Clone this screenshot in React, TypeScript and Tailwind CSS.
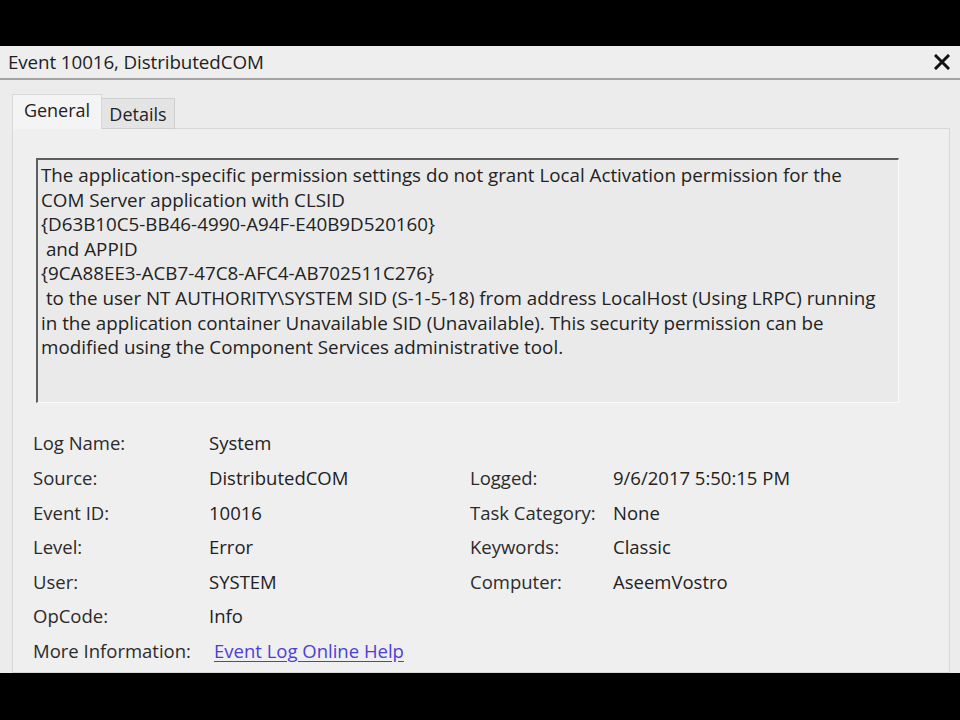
import React from 'react';

const rows: { label: string; value: string; label2?: string; value2?: string; link?: boolean }[] = [
    { label: 'Log Name:', value: 'System' },
    { label: 'Source:', value: 'DistributedCOM', label2: 'Logged:', value2: '9/6/2017 5:50:15 PM' },
    { label: 'Event ID:', value: '10016', label2: 'Task Category:', value2: 'None' },
    { label: 'Level:', value: 'Error', label2: 'Keywords:', value2: 'Classic' },
    { label: 'User:', value: 'SYSTEM', label2: 'Computer:', value2: 'AseemVostro' },
    { label: 'OpCode:', value: 'Info' },
    { label: 'More Information:', value: 'Event Log Online Help', link: true },
];

const message = [
    'The application-specific permission settings do not grant Local Activation permission for the',
    'COM Server application with CLSID',
    '{D63B10C5-BB46-4990-A94F-E40B9D520160}',
    '\u00a0and APPID',
    '{9CA88EE3-ACB7-47C8-AFC4-AB702511C276}',
    '\u00a0to the user NT AUTHORITY\\SYSTEM SID (S-1-5-18) from address LocalHost (Using LRPC) running',
    'in the application container Unavailable SID (Unavailable). This security permission can be',
    'modified using the Component Services administrative tool.',
];

const App = () => {
    return (
        <div className="w-[960px] h-[720px] bg-black flex flex-col overflow-hidden text-[#222] font-['Open_Sans',sans-serif]">
            <div className="h-[46px] shrink-0" />

            <div className="h-[627px] shrink-0 bg-[#ececec] flex flex-col overflow-hidden">
                {/* title bar */}
                <div className="h-[34px] shrink-0 flex items-center justify-between pl-[8px] pr-[10px] border-b-2 border-[#a4a4a4] bg-[#eeeeee]">
                    <span className="text-[18.8px] tracking-[-0.1px] text-[#1e1e1e]">Event 10016, DistributedCOM</span>
                    <svg width="16" height="16" viewBox="0 0 16 16">
                        <path d="M2 2 L14 14 M14 2 L2 14" stroke="#111" strokeWidth="3" strokeLinecap="square" />
                    </svg>
                </div>

                <div className="flex-1 flex flex-col pl-[12px] pr-[10px] pt-[14px]">
                    {/* tabs */}
                    <div className="flex items-end h-[35px] shrink-0 relative z-10">
                        <div className="w-[90px] h-[35px] bg-[#f4f4f4] border border-b-0 border-[#d8d8d8] flex items-center justify-center text-[18px] text-[#222] pb-[4px]">
                            General
                        </div>
                        <div className="w-[73px] h-[31px] bg-[#e4e4e4] border border-l-0 border-[#cfcfcf] flex items-center justify-center text-[18px] text-[#222] pt-[2px]">
                            Details
                        </div>
                    </div>

                    {/* panel */}
                    <div className="flex-1 -mt-px bg-[#efefef] border border-[#d8d8d8] pl-[23px] pr-[50px] pt-[29px]">
                        <div className="h-[245px] border-t-2 border-l-2 border-[#5e5e5e] border-r border-b border-r-[#fafafa] border-b-[#fafafa] bg-[#eaeaea] pl-[3px] pt-[3px] text-[18.8px] leading-[24.6px] text-[#222] whitespace-nowrap overflow-hidden">
                            {message.map((line, i) => (
                                <div key={i}>{line}</div>
                            ))}
                        </div>

                        <div className="mt-[23px] -ml-[3px] text-[18.5px]">
                            {rows.map((r) => (
                                <div key={r.label} className="h-[34.6px] flex items-center">
                                    <span className="w-[176px] shrink-0 text-[#2b2b2b]">{r.label}</span>
                                    {r.link ? (
                                        <span className="ml-[5px] text-[#4a3fd6] underline underline-offset-[3px]">{r.value}</span>
                                    ) : (
                                        <span className="w-[261px] shrink-0 text-[#222]">{r.value}</span>
                                    )}
                                    {r.label2 && (
                                        <>
                                            <span className="w-[143px] shrink-0 text-[#2b2b2b]">{r.label2}</span>
                                            <span className="text-[#222]">{r.value2}</span>
                                        </>
                                    )}
                                </div>
                            ))}
                        </div>
                    </div>
                </div>
            </div>

            <div className="flex-1" />
        </div>
    );
};

export default App;
